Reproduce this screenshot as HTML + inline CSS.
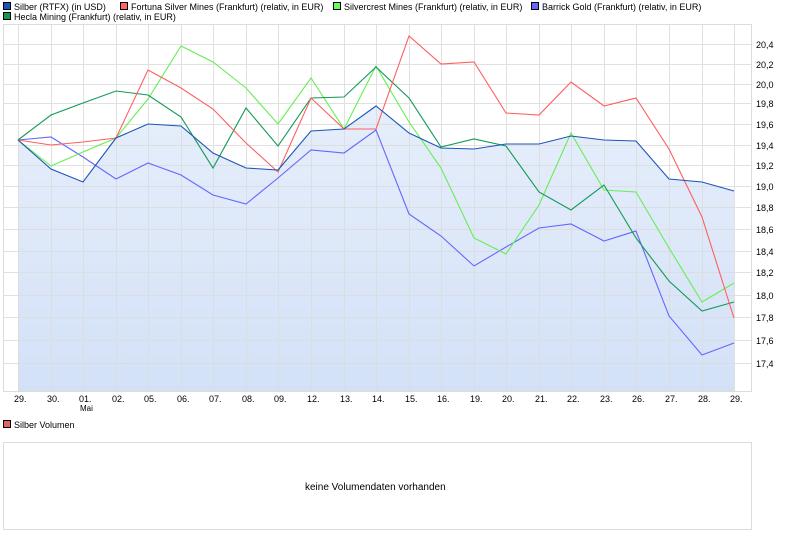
<!DOCTYPE html>
<html><head><meta charset="utf-8"><style>
body{margin:0;background:#fff;width:792px;height:539px;overflow:hidden;font-family:"Liberation Sans","DejaVu Sans",sans-serif;}
svg text{font-family:"Liberation Sans","DejaVu Sans",sans-serif;font-size:9px;fill:#000;}
</style></head><body>
<svg width="792" height="539" viewBox="0 0 792 539" xmlns="http://www.w3.org/2000/svg">
<defs><linearGradient id="g" x1="0" y1="0" x2="0" y2="1"><stop offset="0" stop-color="#e6eefb"/><stop offset="1" stop-color="#d3e1f7"/></linearGradient></defs>
<!-- legend -->
<rect x="3.5" y="2.5" width="7" height="7" fill="#1a56b8" stroke="#000"/><text x="14" y="10">Silber (RTFX) (in USD)</text>
<rect x="120.5" y="2.5" width="7" height="7" fill="#ff6666" stroke="#000"/><text x="131" y="10">Fortuna Silver Mines (Frankfurt) (relativ, in EUR)</text>
<rect x="333.5" y="2.5" width="7" height="7" fill="#66ff55" stroke="#000"/><text x="344" y="10">Silvercrest Mines (Frankfurt) (relativ, in EUR)</text>
<rect x="531.5" y="2.5" width="7" height="7" fill="#6666ff" stroke="#000"/><text x="542" y="10">Barrick Gold (Frankfurt) (relativ, in EUR)</text>
<rect x="3.5" y="12.5" width="7" height="7" fill="#119955" stroke="#000"/><text x="14" y="20">Hecla Mining (Frankfurt) (relativ, in EUR)</text>
<!-- chart box -->
<rect x="3.5" y="24.5" width="748" height="367" fill="#fff" stroke="#dcdcdc"/>
<polygon fill="url(#g)" points="18,140 51,169 83,182 116,138 148,124 181,126 213,153 246,168 278,170 311,131 344,129 376,106 409,133 441,148 474,149 506,144 539,144 571,136 604,140 636,141 669,179 702,182 734,191 734,391 18,391"/>
<g stroke="#dcdcdc" stroke-width="1" opacity="0.85">
<path d="M3 44.5H752M3 64.5H752M3 84.5H752M3 103.5H752M3 124.5H752M3 145.5H752M3 165.5H752M3 186.5H752M3 207.5H752M3 229.5H752M3 251.5H752M3 272.5H752M3 295.5H752M3 317.5H752M3 340.5H752M3 363.5H752"/>
<path d="M18.5 24V391M51.5 24V391M83.5 24V391M116.5 24V391M148.5 24V391M181.5 24V391M213.5 24V391M246.5 24V391M278.5 24V391M311.5 24V391M344.5 24V391M376.5 24V391M409.5 24V391M441.5 24V391M474.5 24V391M506.5 24V391M539.5 24V391M571.5 24V391M604.5 24V391M636.5 24V391M669.5 24V391M702.5 24V391M734.5 24V391"/>
</g>
<g fill="none" stroke-width="1.1">
<polyline stroke="#6666ff" points="18,140 51,137 83,157 116,179 148,163 181,175 213,195 246,204 278,178 311,150 344,153 376,130 409,214 441,236 474,266 506,247 539,228 571,224 604,241 636,231 669,316 702,355 734,343"/>
<polyline stroke="#66ee55" points="18,140 51,166 83,152 116,138 148,99 181,46 213,62 246,88 278,124 311,78 344,129 376,66 409,122 441,168 474,238 506,254 539,205 571,133 604,190 636,192 669,248 702,302 734,283"/>
<polyline stroke="#119955" points="18,140 51,115 83,103 116,91 148,95 181,117 213,168 246,108 278,146 311,98 344,97 376,67 409,98 441,147 474,139 506,146 539,192 571,210 604,185 636,238 669,281 702,311 734,302"/>
<polyline stroke="#ff5f5f" points="18,140 51,145 83,142 116,138 148,70 181,88 213,109 246,143 278,172 311,98 344,129 376,129 409,36 441,64 474,62 506,113 539,115 571,82 604,106 636,98 669,149 702,217 734,318"/>
<polyline stroke="#1a56b8" points="18,140 51,169 83,182 116,138 148,124 181,126 213,153 246,168 278,170 311,131 344,129 376,106 409,133 441,148 474,149 506,144 539,144 571,136 604,140 636,141 669,179 702,182 734,191"/>
</g>
<!-- y labels -->
<g><text x="756" y="48">20,4</text><text x="756" y="68">20,2</text><text x="756" y="88">20,0</text><text x="756" y="107">19,8</text><text x="756" y="128">19,6</text><text x="756" y="149">19,4</text><text x="756" y="169">19,2</text><text x="756" y="190">19,0</text><text x="756" y="211">18,8</text><text x="756" y="233">18,6</text><text x="756" y="255">18,4</text><text x="756" y="276">18,2</text><text x="756" y="299">18,0</text><text x="756" y="321">17,8</text><text x="756" y="344">17,6</text><text x="756" y="367">17,4</text></g>
<!-- x labels -->
<g><text x="14" y="402">29.</text><text x="47" y="402">30.</text><text x="79" y="402">01.</text><text x="80" y="411" style="font-size:8px">Mai</text><text x="112" y="402">02.</text><text x="144" y="402">05.</text><text x="177" y="402">06.</text><text x="209" y="402">07.</text><text x="242" y="402">08.</text><text x="274" y="402">09.</text><text x="307" y="402">12.</text><text x="340" y="402">13.</text><text x="372" y="402">14.</text><text x="405" y="402">15.</text><text x="437" y="402">16.</text><text x="470" y="402">19.</text><text x="502" y="402">20.</text><text x="535" y="402">21.</text><text x="567" y="402">22.</text><text x="600" y="402">23.</text><text x="632" y="402">26.</text><text x="665" y="402">27.</text><text x="698" y="402">28.</text><text x="730" y="402">29.</text></g>
<rect x="3.5" y="420.5" width="7" height="7" fill="#e06666" stroke="#000"/><text x="14" y="428">Silber Volumen</text>
<rect x="3.5" y="442.5" width="748" height="87" fill="#fff" stroke="#dcdcdc"/>
<text x="305" y="490" style="font-size:10px">keine Volumendaten vorhanden</text>
</svg>
</body></html>
